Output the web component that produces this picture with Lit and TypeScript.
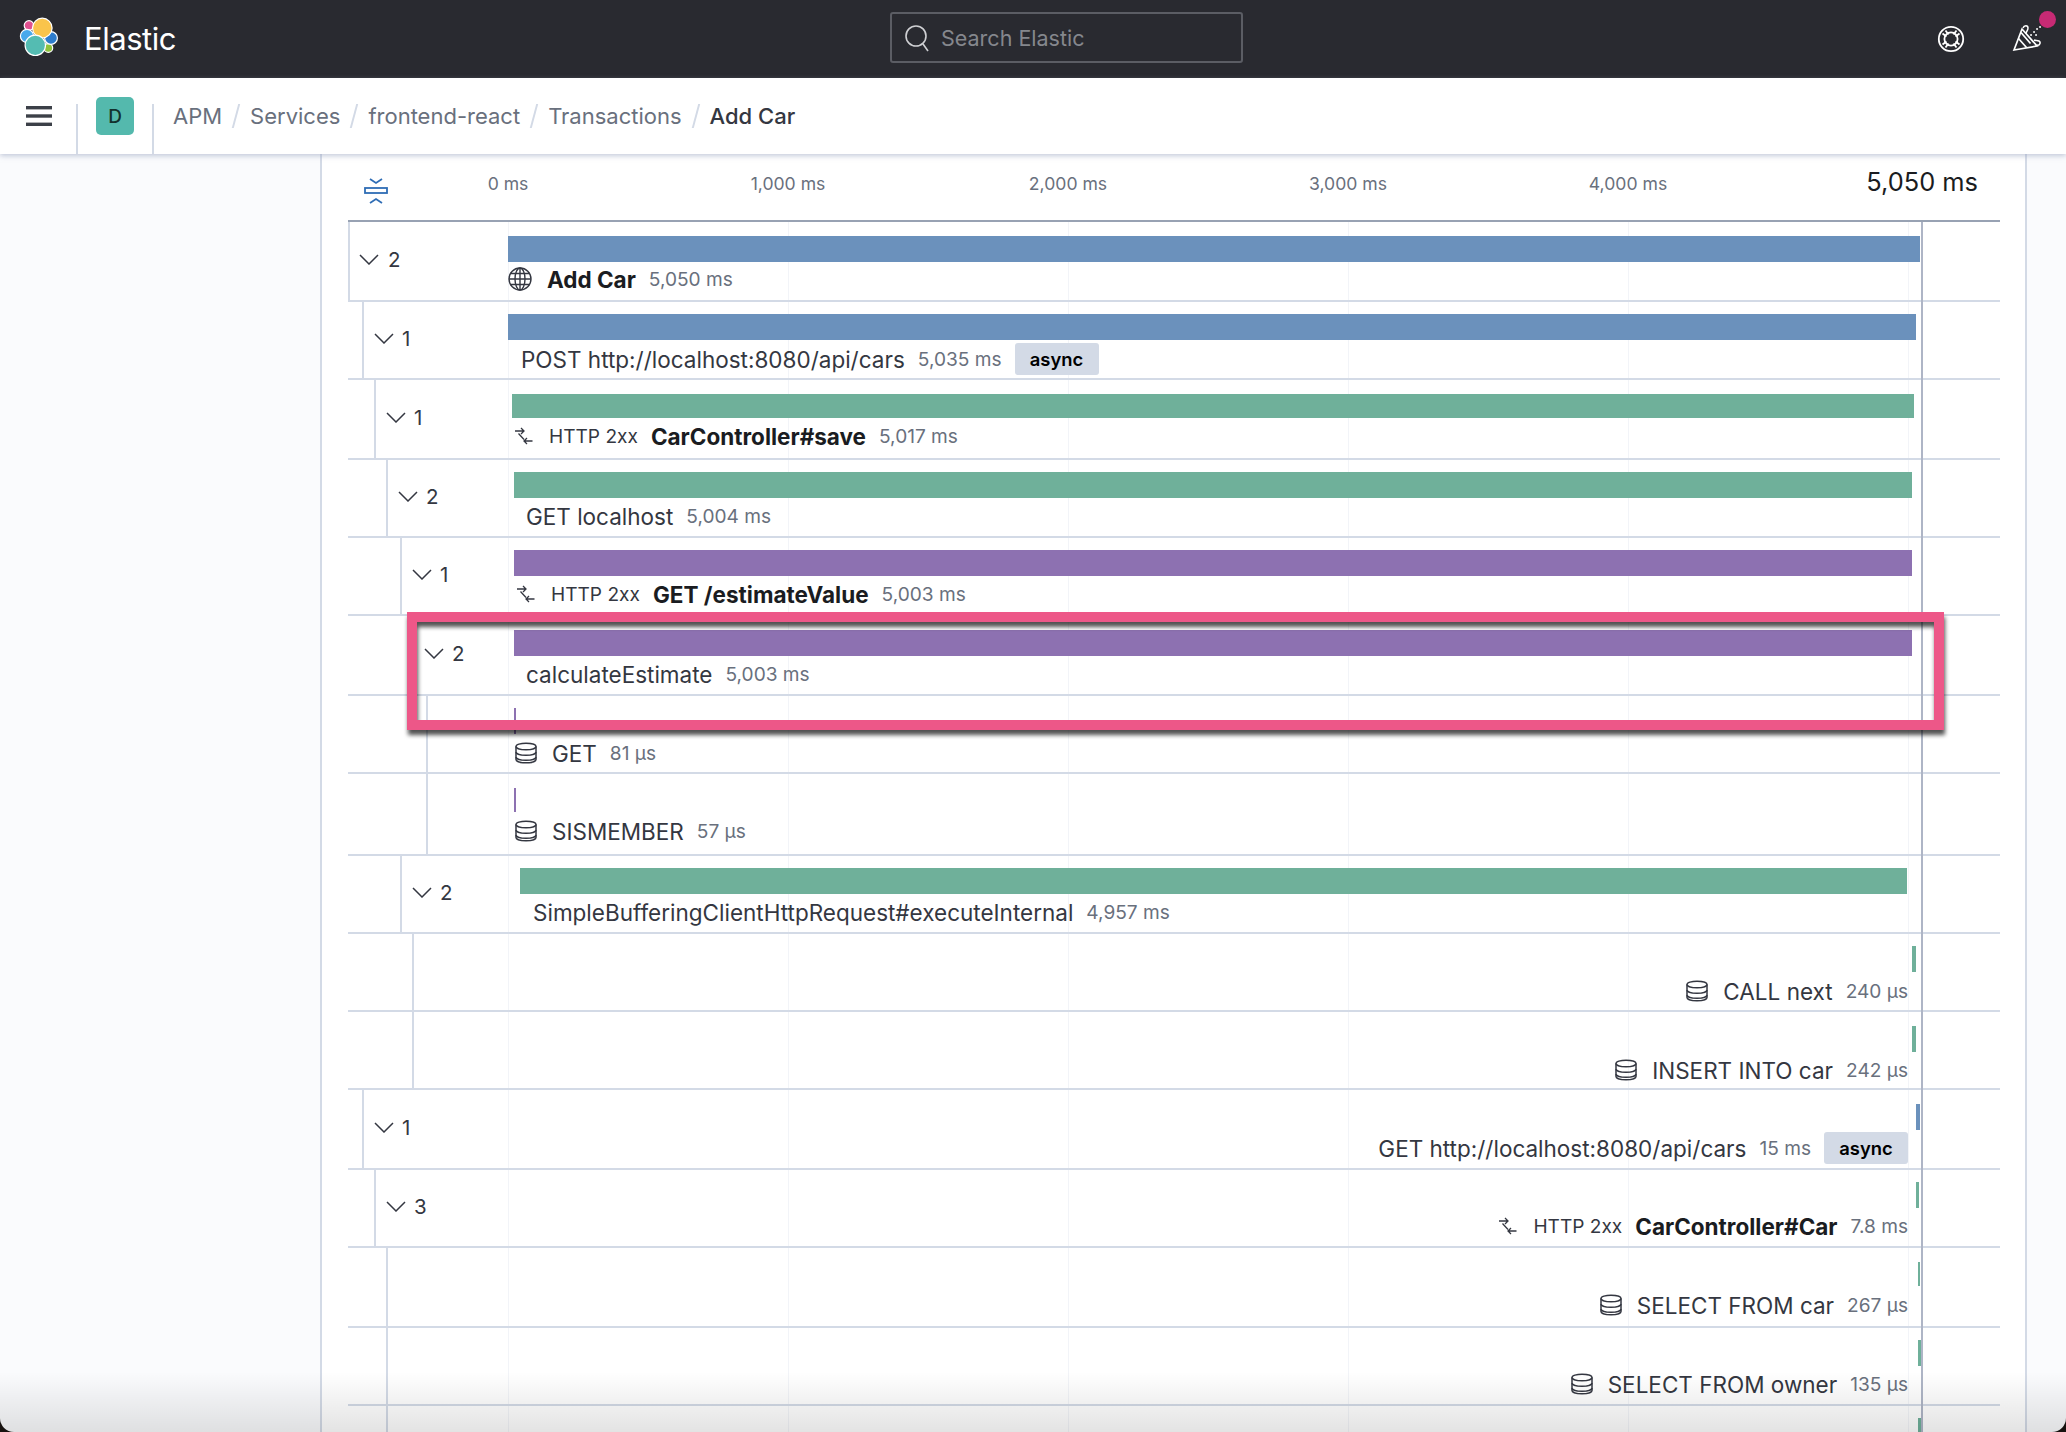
import { LitElement, html, css, nothing } from "lit";
import { customElement } from "lit/decorators.js";

type Row = {
  line: number; h: number; top: number; count?: string; color: string;
  bar: [number, number]; barH?: number; x?: number; icon?: "globe" | "http" | "db";
  pre?: string; name: string; bold?: boolean; dur: string; badge?: boolean; nudge?: number;
};

const BLUE = "#6b91bc", GREEN = "#6fb09a", PURPLE = "#8d71b1";

const ROWS: Row[] = [
  { line: 348, h: 80, top: 14, count: "2", color: BLUE, bar: [508, 1920], x: 508, icon: "globe", name: "Add Car", bold: true, dur: "5,050 ms", nudge: -1 },
  { line: 362, h: 78, top: 12, count: "1", color: BLUE, bar: [508, 1916], x: 521, name: "POST http://localhost:8080/api/cars", dur: "5,035 ms", badge: true, nudge: 1 },
  { line: 374, h: 80, top: 14, count: "1", color: GREEN, bar: [512, 1914], barH: 24, x: 514, icon: "http", pre: "HTTP 2xx", name: "CarController#save", bold: true, dur: "5,017 ms" },
  { line: 386, h: 78, top: 12, count: "2", color: GREEN, bar: [514, 1912], x: 526, name: "GET localhost", dur: "5,004 ms" },
  { line: 400, h: 78, top: 12, count: "1", color: PURPLE, bar: [514, 1912], x: 516, icon: "http", pre: "HTTP 2xx", name: "GET /estimateValue", bold: true, dur: "5,003 ms" },
  { line: 412, h: 80, top: 14, count: "2", color: PURPLE, bar: [514, 1912], x: 526, name: "calculateEstimate", dur: "5,003 ms" },
  { line: 426, h: 78, top: 12, color: PURPLE, bar: [514, 516], x: 515, icon: "db", name: "GET", dur: "81 μs", nudge: 1 },
  { line: 426, h: 82, top: 14, color: PURPLE, bar: [514, 516], barH: 24, x: 515, icon: "db", name: "SISMEMBER", dur: "57 μs", nudge: 1 },
  { line: 400, h: 78, top: 12, count: "2", color: GREEN, bar: [520, 1906.5], x: 533, name: "SimpleBufferingClientHttpRequest#executeInternal", dur: "4,957 ms" },
  { line: 412, h: 78, top: 12, color: GREEN, bar: [1912, 1916], icon: "db", name: "CALL next", dur: "240 μs", nudge: 1 },
  { line: 412, h: 78, top: 14, color: GREEN, bar: [1912, 1916], icon: "db", name: "INSERT INTO car", dur: "242 μs" },
  { line: 362, h: 80, top: 14, count: "1", color: BLUE, bar: [1916, 1920], name: "GET http://localhost:8080/api/cars", dur: "15 ms", badge: true },
  { line: 374, h: 78, top: 12, count: "3", color: GREEN, bar: [1916, 1919], icon: "http", pre: "HTTP 2xx", name: "CarController#Car", bold: true, dur: "7.8 ms" },
  { line: 386, h: 80, top: 14, color: GREEN, bar: [1918, 1920], barH: 24, icon: "db", name: "SELECT FROM car", dur: "267 μs", nudge: 1 },
  { line: 386, h: 78, top: 12, color: GREEN, bar: [1918, 1921], icon: "db", name: "SELECT FROM owner", dur: "135 μs" },
  { line: 386, h: 78, top: 12, color: GREEN, bar: [1918, 1921], x: 0, name: "", dur: "" },
];

const ICONS = {
  globe: html`<svg class="ic" width="24" height="24" viewBox="0 0 24 24" fill="none" stroke="#343741" stroke-width="1.4">
    <circle cx="12" cy="12" r="11"/><ellipse cx="12" cy="12" rx="5" ry="11"/><path d="M12 1v22M1 12h22M2.6 6.5h18.8M2.6 17.5h18.8"/></svg>`,
  http: html`<svg class="ic" width="20" height="20" viewBox="0 0 20 20" fill="none" stroke="#343741" stroke-width="1.3">
    <path d="M1 5h9M7 2l3 3-3 3M4.5 7.5l5.5 6M18.5 15H10M13 12l-3 3 3 3"/></svg>`,
  db: html`<svg class="ic" width="22" height="22" viewBox="0 0 22 22" fill="none" stroke="#343741" stroke-width="1.5">
    <path d="M1 4.5c0-1.9 4.5-3.3 10-3.3s10 1.4 10 3.3v13c0 1.9-4.5 3.3-10 3.3s-10-1.4-10-3.3z"/>
    <path d="M1 4.5c0 1.9 4.5 3.3 10 3.3s10-1.4 10-3.3M1 10c0 1.9 4.5 3.3 10 3.3s10-1.4 10-3.3M1 15c0 1.9 4.5 3.3 10 3.3s10-1.4 10-3.3"/></svg>`,
};

@customElement("app-root")
export class AppRoot extends LitElement {
  static styles = css`
    :host { display: block; width: 2066px; height: 1432px; overflow: hidden; position: relative; font-family: Inter, "Liberation Sans", sans-serif; color: #343741; background: #fafbfd; }
    .page { display: flex; flex-direction: column; height: 1432px; }
    .top { flex: 0 0 78px; background: #292a30; display: flex; align-items: center; }
    .brand { flex: 0 0 890px; display: flex; align-items: center; }
    .logo { margin-left: 18px; }
    .brand span { margin: -2px 0 0 22px; color: #fff; font-size: 31px; font-weight: 400; letter-spacing: -0.45px; }
    .search { flex: 0 0 353px; height: 51px; margin-top: -3px; box-sizing: border-box; border: 2px solid #5b5d64; border-radius: 3px; display: flex; align-items: center; padding-left: 12px; color: #85878d; font-size: 21.5px; gap: 11px; }
    .tools { flex: 1; display: flex; justify-content: flex-end; align-items: center; gap: 47px; padding-right: 22px; }
    .party { position: relative; display: flex; }
    .dot { position: absolute; width: 17px; height: 17px; left: 27px; top: -12px; background: #c72a74; border-radius: 50%; }
    .sub { flex: 0 0 76px; background: #fff; display: flex; align-items: center; position: relative; z-index: 2; box-shadow: 0 2px 5px rgba(152,162,190,.55); }
    .menu { flex: 0 0 76px; display: flex; justify-content: center; box-sizing: border-box; padding-left: 1px; }
    .vr { flex: 0 0 2px; height: 50px; align-self: flex-end; background: #d3dae6; }
    .space { flex: 0 0 74px; display: flex; justify-content: center; }
    .badge-d { width: 38px; height: 38px; border-radius: 5px; background: #54b9ad; color: #12312e; font-size: 19px; font-weight: 500; display: flex; align-items: center; justify-content: center; }
    .crumbs { display: flex; align-items: center; padding-left: 19px; font-size: 22px; color: #69707d; }
    .crumbs i { width: 2px; height: 24px; background: #d3dae6; transform: skewX(-15deg); margin: 0 13px; }
    .crumbs b { font-weight: 500; color: #343741; }
    .body { flex: 1; display: flex; min-height: 0; }
    .side { flex: 0 0 320px; background: #fafbfd; }
    .main { flex: 0 0 1707px; box-sizing: border-box; background: #fff; border-left: 2px solid #d3dae6; border-right: 2px solid #d3dae6; padding: 0 25px 0 26px; overflow: hidden; }
    .rest { flex: 1; background: #fafbfd; }
    .head { height: 66px; display: flex; align-items: flex-start; }
    .collapse { margin: 23px 0 0 16px; flex: 0 0 24px; }
    .ticks { display: flex; margin-left: -20px; flex: 1; }
    .tick { flex: 0 0 280px; text-align: center; font-size: 17.6px; line-height: 24px; margin-top: 18px; color: #69707d; }
    .tick.end { flex: 1; text-align: right; padding-right: 22px; font-size: 25.4px; line-height: 30px; margin-top: 13px; color: #1a1c21; }
    .rows { position: relative; border-top: 2px solid #98a2b3; background-image: linear-gradient(90deg, #f2f4f8 1px, transparent 1px); background-size: 280px 100%; background-position: 160px 0; }
    .row { display: flex; box-sizing: border-box; border-bottom: 2px solid #d3dae6; }
    .tree { flex: none; box-sizing: border-box; border-left: 2px solid #d3dae6; display: flex; align-items: center; padding: 0 0 4px 10px; gap: 8px; font-size: 20.5px; }
    .tree.first { padding-left: 9px; gap: 9px; }
    .content { flex: 1; min-width: 0; display: flex; flex-direction: column; }
    .bar { flex: none; }
    .label { display: flex; align-items: center; height: 36px; gap: 13px; white-space: nowrap; font-size: 22.5px; }
    .label.right { justify-content: flex-end; padding-right: 92px; }
    .pre { font-size: 19.1px; }
    .name.bold { font-weight: 700; color: #1a1c21; }
    .dur { font-size: 19.1px; color: #69707d; }
    .async { background: #d3dae6; color: #000; font-size: 18.4px; font-weight: 600; height: 32px; width: 84px; border-radius: 3px; display: flex; align-items: center; justify-content: center; }
    .ic { flex: none; margin-right: 2px; }
    .marker { position: absolute; left: 1573px; top: 0; bottom: 0; width: 2px; background: #aeb5c6; }
    .frame { position: absolute; left: 59px; top: 390px; width: 1537px; height: 118px; box-sizing: border-box; border: 10px solid #ed5788; filter: drop-shadow(1px 5px 2px rgba(0,0,0,.68)); }
    .fade { position: absolute; left: 0; right: 0; bottom: 0; height: 60px; background: linear-gradient(180deg, rgba(0,0,0,0), rgba(0,0,0,.11)); pointer-events: none; z-index: 5; }
    .corners { position: absolute; inset: 0; border-radius: 0 0 14px 14px; box-shadow: 0 0 0 30px #17120f; pointer-events: none; z-index: 6; }
  `;

  private renderRow(r: Row) {
    const right = r.x === undefined;
    const pad = right ? "" : `padding-left:${(r.x as number) - 508}px;`;
    const nudge = r.nudge ? `margin-top:${r.nudge}px;` : "";
    return html`<div class="row" style="height:${r.h}px">
      <div style="flex:0 0 ${r.line - 348}px"></div>
      <div class="tree ${r.line === 348 ? "first" : ""}" style="width:${508 - r.line}px">
        ${r.count ? html`<svg width="20" height="11" viewBox="0 0 20 11" fill="none" stroke="#343741" stroke-width="1.5"><path d="M1 1l9 9 9-9"/></svg><span>${r.count}</span>` : nothing}
      </div>
      <div class="content" style="padding-top:${r.top}px">
        <div class="bar" style="margin-left:${r.bar[0] - 508}px;width:${r.bar[1] - r.bar[0]}px;height:${r.barH ?? 26}px;background:${r.color}"></div>
        ${r.name ? html`<div class="label ${right ? "right" : ""}" style="${pad}${nudge}">
          ${r.icon ? ICONS[r.icon] : nothing}
          ${r.pre ? html`<span class="pre">${r.pre}</span>` : nothing}
          <span class="name ${r.bold ? "bold" : ""}">${r.name}</span>
          <span class="dur">${r.dur}</span>
          ${r.badge ? html`<span class="async">async</span>` : nothing}
        </div>` : nothing}
      </div>
    </div>`;
  }

  render() {
    return html`<div class="page">
      <div class="top">
        <div class="brand">
          <svg class="logo" width="44" height="50" viewBox="18 16 44 50" stroke="#fff" stroke-width="1.2">
            <circle cx="29" cy="27.5" r="4.8" fill="#e0508f"/>
            <circle cx="48.3" cy="50" r="4.4" fill="#8fc23c"/>
            <circle cx="51" cy="40" r="6.4" fill="#2d7ccc"/>
            <circle cx="27" cy="38" r="6.6" fill="#47a9ec"/>
            <circle cx="42.3" cy="30" r="9.8" fill="#fac44b"/>
            <circle cx="35.3" cy="47.3" r="10.2" fill="#54bcb2"/>
          </svg>
          <span>Elastic</span>
        </div>
        <div class="search">
          <svg width="26" height="28" viewBox="0 0 26 28" fill="none" stroke="#cfd0d3" stroke-width="1.6"><circle cx="12" cy="12" r="10"/><path d="M19 20l5 7"/></svg>
          Search Elastic
        </div>
        <div class="tools">
          <svg width="28" height="28" viewBox="0 0 28 28" fill="none" stroke="#fff" stroke-width="1.8">
            <circle cx="14" cy="14" r="12.2"/><circle cx="14" cy="14" r="6.6"/>
            <path d="M5.5 8.5l4 3M8.5 5.5l3 4M22.5 8.5l-4 3M19.5 5.5l-3 4M5.5 19.5l4-3M8.5 22.5l3-4M22.5 19.5l-4-3M19.5 22.5l-3-4"/>
          </svg>
          <div class="party">
            <svg width="32" height="32" viewBox="0 0 32 32" fill="none" stroke="#fff" stroke-width="1.7">
              <path d="M2 27L10 6l15 17z"/><path d="M6.5 15.5l8 9M9 9.5l9.5 11"/>
              <path d="M11 5c1-3 5-3 5 0s-2 3-2 6M25 22c3 1 4-3 2-4s-3 0-5-1" stroke-width="1.5"/>
              <path d="M19 12l.1 0M22 9l.1 0M25 6l.1 0M24 12l.1 0M28 4l.1 0" stroke-linecap="round" stroke-width="1.8"/>
            </svg>
            <div class="dot"></div>
          </div>
        </div>
      </div>
      <div class="sub">
        <div class="menu">
          <svg width="26" height="20" viewBox="0 0 26 20" fill="#3c4048"><rect width="26" height="3.4" y="0"/><rect width="26" height="3.4" y="8.3"/><rect width="26" height="3.4" y="16.6"/></svg>
        </div>
        <div class="vr"></div>
        <div class="space"><div class="badge-d">D</div></div>
        <div class="vr"></div>
        <div class="crumbs">APM<i></i>Services<i></i>frontend-react<i></i>Transactions<i></i><b>Add Car</b></div>
      </div>
      <div class="body">
        <div class="side"></div>
        <div class="main">
          <div class="head">
            <svg class="collapse" width="24" height="27" viewBox="0 0 24 27" fill="none" stroke="#2f6db5" stroke-width="1.8">
              <path d="M6 2l6 4 6-4M6 26l6-4 6 4"/><rect x="1" y="11" width="22" height="5"/>
            </svg>
            <div class="ticks">
              ${["0 ms", "1,000 ms", "2,000 ms", "3,000 ms", "4,000 ms"].map((t) => html`<div class="tick">${t}</div>`)}
              <div class="tick end">5,050 ms</div>
            </div>
          </div>
          <div class="rows">
            ${ROWS.map((r) => this.renderRow(r))}
            <div class="marker"></div>
            <div class="frame"></div>
          </div>
        </div>
        <div class="rest"></div>
      </div>
      <div class="fade"></div>
      <div class="corners"></div>
    </div>`;
  }
}
